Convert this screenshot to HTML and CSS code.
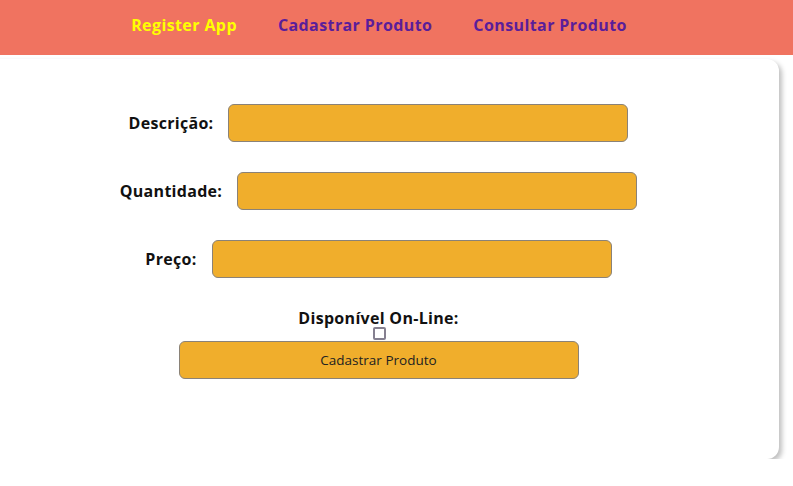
FILE: index.html
```html
<!DOCTYPE html>
<html lang="pt-BR">
<head>
<meta charset="utf-8">
<title>Register App</title>
<link rel="stylesheet" href="styles.css">
</head>
<body>
<header class="topbar">
  <nav class="nav">
    <a class="nav-link brand" href="#">Register App</a>
    <a class="nav-link" href="#">Cadastrar Produto</a>
    <a class="nav-link" href="#">Consultar Produto</a>
  </nav>
</header>
<main class="card">
  <form class="form">
    <div class="row">
      <label class="label" for="desc">Descrição:</label>
      <input class="field" id="desc" type="text">
    </div>
    <div class="row">
      <label class="label" for="qtd">Quantidade:</label>
      <input class="field" id="qtd" type="text">
    </div>
    <div class="row">
      <label class="label" for="preco">Preço:</label>
      <input class="field" id="preco" type="text">
    </div>
    <div class="online">
      <label class="label online-label" for="online">Disponível On-Line:</label>
      <input class="check" id="online" type="checkbox">
      <button class="submit" type="button">Cadastrar Produto</button>
    </div>
  </form>
</main>
</body>
</html>
```
FILE: styles.css
```css
* { box-sizing: border-box; }
html, body { margin: 0; padding: 0; background: #ffffff; overflow: hidden; }
body { font-family: "Open Sans", "DejaVu Sans", sans-serif; color: #111; }

.topbar {
  height: 55px;
  background: #f07360;
  display: flex;
  align-items: center;
  justify-content: center;
  padding: 0 35px 5px 0;
}
.nav { display: flex; gap: 41px; align-items: center; }
.nav-link {
  font-weight: 700;
  font-size: 16px;
  color: #5a1d9a;
  text-decoration: none;
  letter-spacing: 0.4px;
}
.nav-link.brand { color: #ffff00; }

.card {
  margin: 4px 0 0 -22px;
  width: 801px;
  height: 400px;
  background: #fff;
  border-radius: 12px;
  box-shadow: 3px 3px 5px rgba(0,0,0,0.25);
  padding-top: 45px;
}
.form { display: flex; flex-direction: column; align-items: center; gap: 30px; }
.row { display: flex; align-items: center; gap: 15px; }
.label { font-weight: 700; font-size: 16px; color: #111; letter-spacing: 0.3px; }
.field {
  width: 400px;
  height: 38px;
  background: #f0ae2c;
  border: 1px solid #8a8278;
  border-radius: 6px;
  outline: none;
}
.online { display: flex; flex-direction: column; align-items: center; padding-top: 1px; }
.online-label { font-size: 16px; line-height: 18px; }
.check {
  appearance: none;
  -webkit-appearance: none;
  width: 13px;
  height: 13px;
  margin: 0 0 1px 1px;
  border: 2px solid #858090;
  border-radius: 2px;
  background: #fff;
}
.submit {
  width: 400px;
  height: 38px;
  background: #f0ae2c;
  border: 1px solid #8a8278;
  border-radius: 6px;
  font-family: "Open Sans", sans-serif;
  font-size: 13.5px;
  color: #222;
}
```
